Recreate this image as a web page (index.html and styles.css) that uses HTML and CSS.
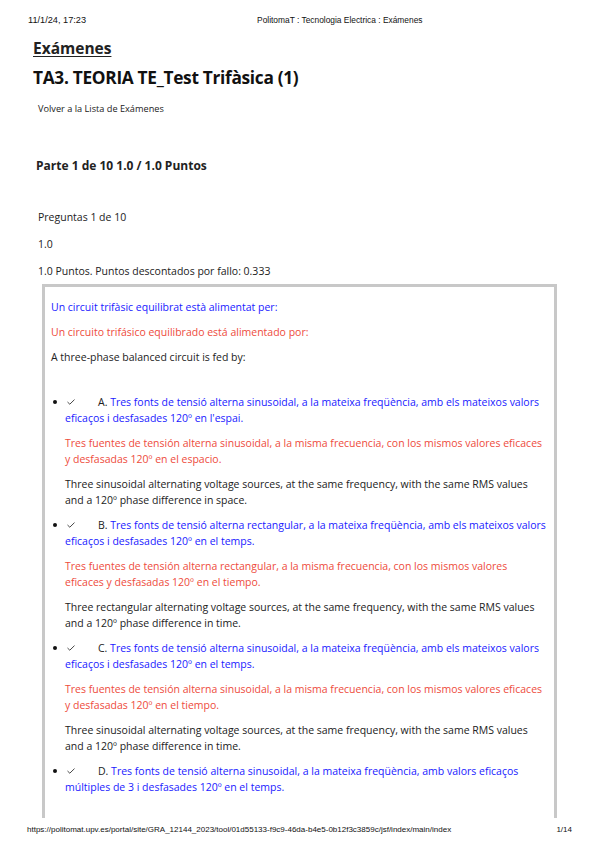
FILE: index.html
```html
<!DOCTYPE html>
<html lang="es">
<head>
    <meta charset="UTF-8">
    <meta name="viewport" content="width=device-width, initial-scale=1.0">
    <title>PolitomaT : Tecnologia Electrica : Exámenes</title>
    <link rel="stylesheet" href="styles.css">
</head>
<body>
    <div class="print-header">
        <span class="print-date">11/1/24, 17:23</span>
        <span class="print-title">PolitomaT : Tecnologia Electrica : Exámenes</span>
    </div>

    <div class="page">
        <h2 class="breadcrumb"><a href="#">Exámenes</a></h2>
        <h1 class="exam-title">TA3. TEORIA TE_Test Trifàsica (1)</h1>
        <a class="back-link" href="#">Volver a la Lista de Exámenes</a>

        <h3 class="part-title">Parte 1 de 10 1.0 / 1.0 Puntos</h3>

        <div class="question-info">
            <p>Preguntas 1 de 10</p>
            <p>1.0</p>
            <p>1.0 Puntos. Puntos descontados por fallo: 0.333</p>
        </div>

        <!-- Question box -->
        <div class="question">
            <p class="ca">Un circuit trifàsic equilibrat està alimentat per:</p>
            <p class="es">Un circuito trifásico equilibrado está alimentado por:</p>
            <p class="en">A three-phase balanced circuit is fed by:</p>

            <ul class="answers">
                <li>
                    <p class="answer-line ca"><svg class="check" width="8" height="6" viewBox="0 0 8 6"><polyline points="0.5,3 2.8,5.2 7.5,0.6"/></svg><span class="letter">A.</span> Tres fonts de tensió alterna sinusoidal, a la mateixa freqüència, amb els mateixos valors eficaços i desfasades 120º en l'espai.</p>
                    <p class="es">Tres fuentes de tensión alterna sinusoidal, a la misma frecuencia, con los mismos valores eficaces y desfasadas 120º en el espacio.</p>
                    <p class="en">Three sinusoidal alternating voltage sources, at the same frequency, with the same RMS values and a 120º phase difference in space.</p>
                </li>
                <li>
                    <p class="answer-line ca"><svg class="check" width="8" height="6" viewBox="0 0 8 6"><polyline points="0.5,3 2.8,5.2 7.5,0.6"/></svg><span class="letter">B.</span> Tres fonts de tensió alterna rectangular, a la mateixa freqüència, amb els mateixos valors eficaços i desfasades 120º en el temps.</p>
                    <p class="es">Tres fuentes de tensión alterna rectangular, a la misma frecuencia, con los mismos valores eficaces y desfasadas 120º en el tiempo.</p>
                    <p class="en">Three rectangular alternating voltage sources, at the same frequency, with the same RMS values and a 120º phase difference in time.</p>
                </li>
                <li>
                    <p class="answer-line ca"><svg class="check" width="8" height="6" viewBox="0 0 8 6"><polyline points="0.5,3 2.8,5.2 7.5,0.6"/></svg><span class="letter">C.</span> Tres fonts de tensió alterna sinusoidal, a la mateixa freqüència, amb els mateixos valors eficaços i desfasades 120º en el temps.</p>
                    <p class="es">Tres fuentes de tensión alterna sinusoidal, a la misma frecuencia, con los mismos valores eficaces y desfasadas 120º en el tiempo.</p>
                    <p class="en">Three sinusoidal alternating voltage sources, at the same frequency, with the same RMS values and a 120º phase difference in time.</p>
                </li>
                <li>
                    <p class="answer-line ca"><svg class="check" width="8" height="6" viewBox="0 0 8 6"><polyline points="0.5,3 2.8,5.2 7.5,0.6"/></svg><span class="letter">D.</span> Tres fonts de tensió alterna sinusoidal, a la mateixa freqüència, amb valors eficaços múltiples de 3 i desfasades 120º en el temps.</p>
                </li>
            </ul>
        </div>
    </div>

    <div class="print-footer">
        <span>https://politomat.upv.es/portal/site/GRA_12144_2023/tool/01d55133-f9c9-46da-b4e5-0b12f3c3859c/jsf/index/main/index</span>
        <span>1/14</span>
    </div>
</body>
</html>
```

FILE: styles.css
```css
* {
    margin: 0;
    padding: 0;
    box-sizing: border-box;
}

html, body {
    height: 100%;
}

body {
    font-family: 'Open Sans', sans-serif;
    color: #222;
    background: #fff;
    display: flex;
    flex-direction: column;
    overflow: hidden;
}

a {
    color: inherit;
    text-decoration: none;
}

/* browser print header / footer */
.print-header,
.print-footer {
    font-family: 'Liberation Sans', Arial, sans-serif;
    font-size: 8px;
    color: #111;
    display: flex;
    align-items: center;
}

.print-header {
    height: 20px;
    margin-top: 10px;
    padding-left: 28px;
}

.print-date {
    font-size: 9.2px;
}

.print-title {
    margin-left: 171px;
    font-size: 8.4px;
}

.print-footer {
    height: 22px;
    justify-content: space-between;
    padding: 0 27px;
    margin-bottom: 8px;
}

.page {
    flex: 1;
    overflow: hidden;
    padding: 6px 42px 0 33px;
}

.breadcrumb {
    font-size: 15.5px;
    font-weight: 700;
    line-height: 24px;
}

.breadcrumb a {
    text-decoration: underline;
    text-underline-offset: 2px;
}

.exam-title {
    font-size: 17.3px;
    font-weight: 700;
    letter-spacing: -0.3px;
    line-height: 26px;
    margin-top: 5px;
    color: #111;
}

.back-link {
    display: block;
    font-size: 9.2px;
    margin: 11px 0 0 5px;
}

.part-title {
    font-size: 12px;
    font-weight: 700;
    margin: 42px 0 0 3px;
}

.question-info {
    font-size: 10.5px;
    margin: 35px 0 0 5px;
}

.question-info p {
    line-height: 16px;
    margin-bottom: 11px;
}

.question-info p:last-child {
    margin-bottom: 5px;
}

.question {
    border: 3px solid #c8c8c8;
    border-bottom: none;
    margin: 0 0 0 9px;
    padding: 12px 8px 30px 6px;
    font-size: 10.5px;
    line-height: 16px;
}

.question p {
    margin-bottom: 9px;
}

.ca { color: #1a1aff; }
.es { color: #ee4b3c; }
.en { color: #222; }

.answers {
    list-style: none;
    padding-left: 14px;
    margin-top: 29px;
}

.answers li {
    margin-bottom: 9px;
}

/* bullet + check hang to the left of the first line */
.answer-line {
    text-indent: -12px;
}

.answer-line::before {
    content: "";
    display: inline-block;
    width: 4px;
    height: 4px;
    border-radius: 50%;
    background: #111;
    margin-right: 8px;
    vertical-align: 2px;
}

.check {
    width: 8px;
    height: 6px;
    margin: 0 23px 0 2px;
    vertical-align: 1px;
    fill: none;
    stroke: #333;
    stroke-width: 0.9;
}

.letter {
    color: #222;
}
```
